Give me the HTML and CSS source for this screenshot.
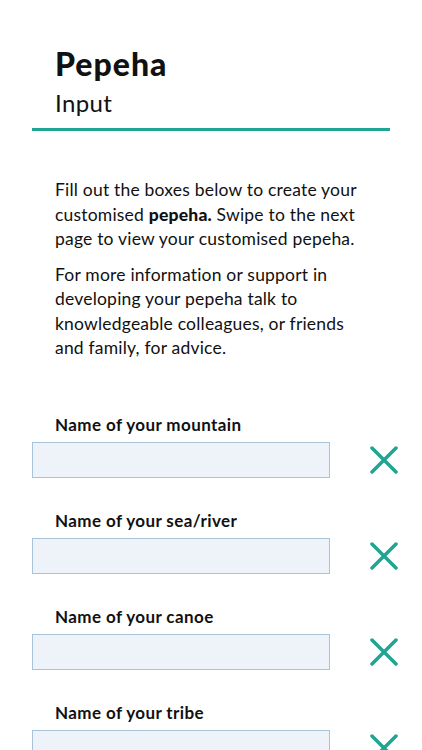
FILE: index.html
```html
<!DOCTYPE html>
<html>
<head>
<meta charset="utf-8">
<link rel="stylesheet" href="styles.css">
</head>
<body>
<div class="page">
  <header class="head">
    <h1 class="title">Pepeha</h1>
    <h2 class="subtitle">Input</h2>
  </header>
  <div class="rule"></div>
  <section class="intro">
    <p>Fill out the boxes below to create your customised <b>pepeha.</b> Swipe to the next page to view your customised pepeha.</p>
    <p>For more information or support in developing your pepeha talk to knowledgeable colleagues, or friends and family, for advice.</p>
  </section>
  <form class="fields">
    <div class="field">
      <label class="label">Name of your mountain</label>
      <div class="row">
        <input class="box" type="text">
        <svg class="clear" viewBox="0 0 28 28"><path d="M2 2L26 26M26 2L2 26"/></svg>
      </div>
    </div>
    <div class="field">
      <label class="label">Name of your sea/river</label>
      <div class="row">
        <input class="box" type="text">
        <svg class="clear" viewBox="0 0 28 28"><path d="M2 2L26 26M26 2L2 26"/></svg>
      </div>
    </div>
    <div class="field">
      <label class="label">Name of your canoe</label>
      <div class="row">
        <input class="box" type="text">
        <svg class="clear" viewBox="0 0 28 28"><path d="M2 2L26 26M26 2L2 26"/></svg>
      </div>
    </div>
    <div class="field">
      <label class="label">Name of your tribe</label>
      <div class="row">
        <input class="box" type="text">
        <svg class="clear" viewBox="0 0 28 28"><path d="M2 2L26 26M26 2L2 26"/></svg>
      </div>
    </div>
  </form>
</div>
</body>
</html>
```
FILE: styles.css
```css
html, body {
  margin: 0;
  padding: 0;
  background: #ffffff;
}
body {
  font-family: Lato, "Noto Sans", sans-serif;
  color: #111111;
  width: 422px;
  height: 750px;
  overflow: hidden;
}
.page {
  padding-top: 44px;
}
.head {
  padding-left: 55px;
}
.title {
  margin: 0;
  font-size: 32px;
  font-weight: 900;
  line-height: 40px;
  letter-spacing: 1px;
}
.subtitle {
  margin: 4px 0 0 0;
  font-size: 24px;
  font-weight: 400;
  line-height: 30px;
  letter-spacing: 0.4px;
}
.rule {
  margin: 10px 32px 0 32px;
  height: 3px;
  background: #1fa592;
}
.intro {
  box-sizing: border-box;
  width: 370px;
  padding: 47px 0 0 55px;
}
.intro p {
  margin: 0 0 11px 0;
  font-size: 17.5px;
  line-height: 24.5px;
  letter-spacing: 0.2px;
}
.intro b {
  font-weight: 900;
}
.fields {
  margin-top: 53px;
  display: flex;
  flex-direction: column;
  gap: 32px;
}
.field {
  display: flex;
  flex-direction: column;
}
.label {
  padding-left: 55px;
  font-size: 17px;
  font-weight: 700;
  line-height: 22px;
  letter-spacing: 0.4px;
  margin-bottom: 6px;
}
.row {
  display: flex;
  align-items: center;
  padding-left: 32px;
}
.box {
  box-sizing: border-box;
  width: 298px;
  height: 36px;
  margin: 0;
  border: 1px solid #a7c3da;
  background: #eef3f9;
  padding: 0 8px;
  font: inherit;
  border-radius: 0;
  outline: none;
}
.clear {
  width: 28px;
  height: 28px;
  margin-left: 40px;
  fill: none;
  stroke: #1fa592;
  stroke-width: 3.5;
  stroke-linecap: round;
}
```
